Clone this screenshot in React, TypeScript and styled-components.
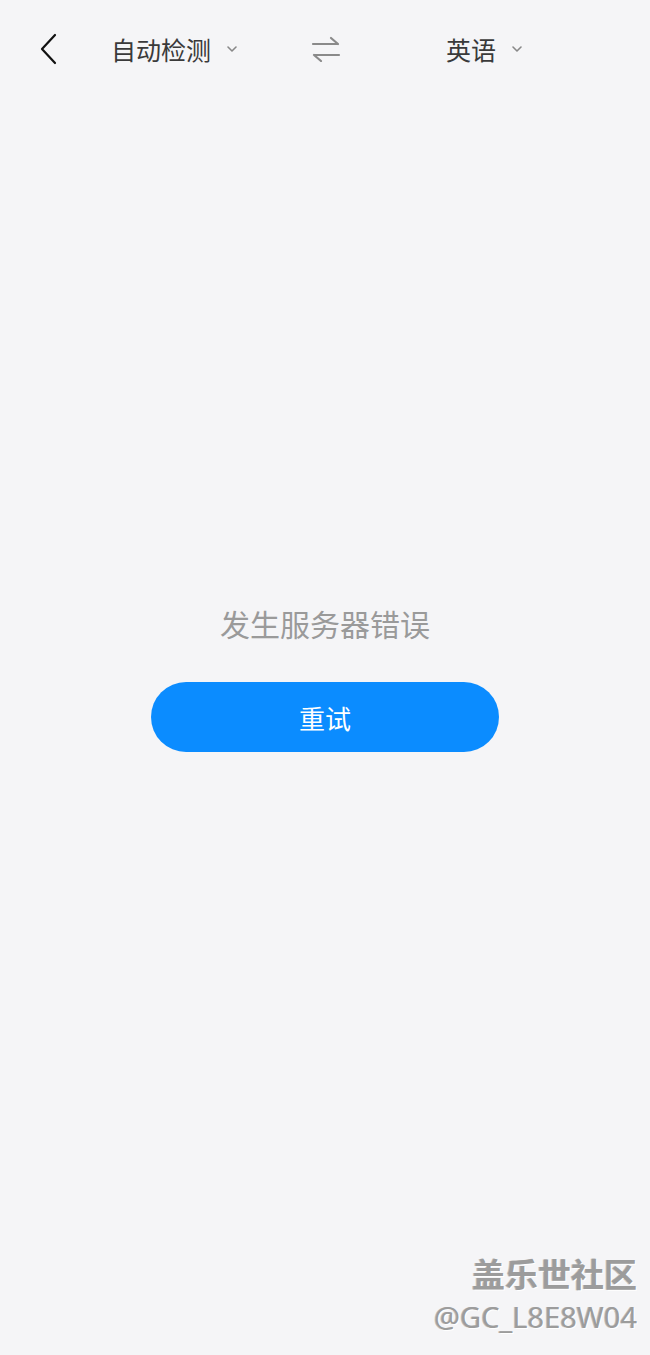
import React from "react";
import styled, { createGlobalStyle } from "styled-components";

const GlobalStyle = createGlobalStyle`
  html, body {
    margin: 0;
    padding: 0;
    background: #f5f5f7;
  }
  body {
    font-family: "Noto Sans CJK SC", "Noto Sans", sans-serif;
  }
`;

const Page = styled.div`
  width: 650px;
  height: 1355px;
  background: #f5f5f7;
  display: flex;
  flex-direction: column;
  position: relative;
  overflow: hidden;
`;

const Header = styled.div`
  height: 98px;
  display: flex;
  align-items: center;
`;

const BackButton = styled.button`
  width: 98px;
  height: 98px;
  border: none;
  background: none;
  padding: 0 0 0 38px;
  display: flex;
  align-items: center;
  cursor: pointer;
`;

const LangPicker = styled.div<{ $offset: number }>`
  width: 200px;
  padding-left: ${(p) => p.$offset}px;
  box-sizing: border-box;
  display: flex;
  align-items: center;
  gap: 15px;
  color: #3a3a3a;
  font-size: 25px;
  line-height: 1;
`;

const SwapSlot = styled.div`
  width: 124px;
  display: flex;
  justify-content: flex-start;
  padding-left: 13px;
  box-sizing: border-box;
`;

const Body = styled.div`
  flex: 1;
  display: flex;
  flex-direction: column;
  align-items: center;
  padding-top: 505px;
`;

const ErrorText = styled.div`
  font-size: 30px;
  color: #9a9a9a;
  line-height: 40px;
`;

const RetryButton = styled.button`
  margin-top: 39px;
  width: 348px;
  height: 70px;
  border: none;
  border-radius: 35px;
  background: #0b8cff;
  color: #fff;
  font-family: "Noto Sans CJK SC", sans-serif;
  font-size: 26px;
  cursor: pointer;
`;

const Watermark = styled.div`
  position: absolute;
  right: 13px;
  bottom: 18px;
  display: flex;
  flex-direction: column;
  align-items: flex-end;
  color: #9c9c9c;
  text-shadow: 1px 1px 0 #ffffff, -1px 0 0 #bdbdbd;
`;

const MarkTitle = styled.div`
  font-size: 33px;
  font-weight: 700;
  line-height: 44px;
`;

const MarkUser = styled.div`
  font-family: "Noto Sans", sans-serif;
  font-size: 29px;
  line-height: 40px;
  margin-top: 2px;
`;

const Caret = () => (
  <svg width="12" height="8" viewBox="0 0 12 8" fill="none">
    <path d="M2 2 L6 6 L10 2" stroke="#888" strokeWidth="1.6" strokeLinecap="round" strokeLinejoin="round" />
  </svg>
);

const App: React.FC = () => {
  return (
    <Page>
      <GlobalStyle />
      <Header>
        <BackButton aria-label="返回">
          <svg width="20" height="32" viewBox="0 0 20 32" fill="none">
            <path d="M17 2 L4 16 L17 30" stroke="#111" strokeWidth="2.2" strokeLinecap="round" strokeLinejoin="round" />
          </svg>
        </BackButton>
        <LangPicker $offset={13}>
          <span>自动检测</span>
          <Caret />
        </LangPicker>
        <SwapSlot>
          <svg width="30" height="26" viewBox="0 0 30 26" fill="none">
            <path d="M2 8 H27 M20 2 L27 8" stroke="#8a8a8a" strokeWidth="2.2" strokeLinecap="round" strokeLinejoin="round" />
            <path d="M28 19 H3 M10 25 L3 19" stroke="#8a8a8a" strokeWidth="2.2" strokeLinecap="round" strokeLinejoin="round" />
          </svg>
        </SwapSlot>
        <LangPicker $offset={24}>
          <span>英语</span>
          <Caret />
        </LangPicker>
      </Header>
      <Body>
        <ErrorText>发生服务器错误</ErrorText>
        <RetryButton>重试</RetryButton>
      </Body>
      <Watermark>
        <MarkTitle>盖乐世社区</MarkTitle>
        <MarkUser>@GC_L8E8W04</MarkUser>
      </Watermark>
    </Page>
  );
};

export default App;
